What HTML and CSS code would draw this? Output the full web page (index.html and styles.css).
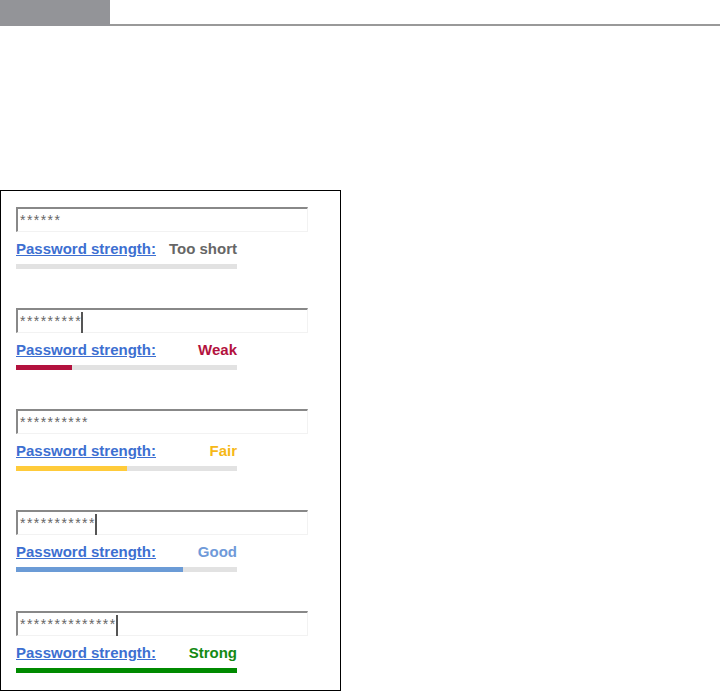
FILE: index.html
```html
<!DOCTYPE html>
<html>
<head>
<meta charset="utf-8">
<link rel="stylesheet" href="styles.css">
</head>
<body>
<div class="topbar">
  <div class="tab"></div>
  <div class="rule"></div>
</div>
<div class="panel">
  <div class="row">
    <div class="field"><span class="dots">******</span></div>
    <div class="meta"><a class="lbl" href="#">Password strength:</a><span class="st short">Too short</span></div>
    <div class="bar"></div>
  </div>
  <div class="row r2">
    <div class="field"><span class="dots">*********</span><span class="caret"></span></div>
    <div class="meta"><a class="lbl" href="#">Password strength:</a><span class="st weak">Weak</span></div>
    <div class="bar"><div class="fill weak-f"></div></div>
  </div>
  <div class="row">
    <div class="field"><span class="dots">**********</span></div>
    <div class="meta"><a class="lbl" href="#">Password strength:</a><span class="st fair">Fair</span></div>
    <div class="bar"><div class="fill fair-f"></div></div>
  </div>
  <div class="row">
    <div class="field"><span class="dots">***********</span><span class="caret"></span></div>
    <div class="meta"><a class="lbl" href="#">Password strength:</a><span class="st good">Good</span></div>
    <div class="bar"><div class="fill good-f"></div></div>
  </div>
  <div class="row">
    <div class="field"><span class="dots">**************</span><span class="caret"></span></div>
    <div class="meta"><a class="lbl" href="#">Password strength:</a><span class="st strong">Strong</span></div>
    <div class="bar"><div class="fill strong-f"></div></div>
  </div>
</div>
</body>
</html>
```
FILE: styles.css
```css
html, body {
  margin: 0;
  padding: 0;
  background: #fff;
  font-family: "Liberation Sans", Arial, sans-serif;
}
.topbar {
  display: flex;
  height: 26px;
}
.tab {
  width: 110px;
  height: 26px;
  background: #939498;
}
.rule {
  flex: 1;
  height: 24px;
  border-bottom: 2px solid #999;
}
.panel {
  margin-top: 164px;
  width: 341px;
  height: 501px;
  box-sizing: border-box;
  border: 1px solid #000;
  padding: 16px 0 0 15px;
}
.row {
  margin-bottom: 39px;
}
.field {
  width: 292px;
  height: 25px;
  box-sizing: border-box;
  border-top: 2px solid #888;
  border-left: 2px solid #888;
  border-right: 1px solid #f2f2f2;
  border-bottom: 1px solid #f2f2f2;
  display: flex;
  align-items: flex-start;
  padding: 2px 0 0 2px;
}
.dots {
  font-size: 14px;
  line-height: 18px;
  color: #666;
  letter-spacing: 1.45px;
}
.caret {
  width: 0;
  height: 21px;
  border-left: 2px solid #555;
  margin-left: -1px;
}
.meta {
  width: 221px;
  margin-top: 8px;
  display: flex;
  justify-content: space-between;
  font-size: 15px;
  font-weight: bold;
  line-height: 17px;
}
.lbl {
  color: #3d6fd1;
  text-decoration: underline;
}
.st.short { color: #666; }
.st.weak { color: #b3123e; }
.st.fair { color: #f6b817; }
.st.good { color: #6f9ad9; }
.st.strong { color: #138a13; }
.bar {
  width: 221px;
  height: 5px;
  margin-top: 7px;
  background: #e2e2e2;
}
.fill {
  height: 5px;
}
.weak-f { width: 56px; background: #b3123e; }
.fair-f { width: 111px; background: #ffcb3a; }
.good-f { width: 167px; background: #6b9bd6; }
.strong-f { width: 221px; background: #008a00; }
```
